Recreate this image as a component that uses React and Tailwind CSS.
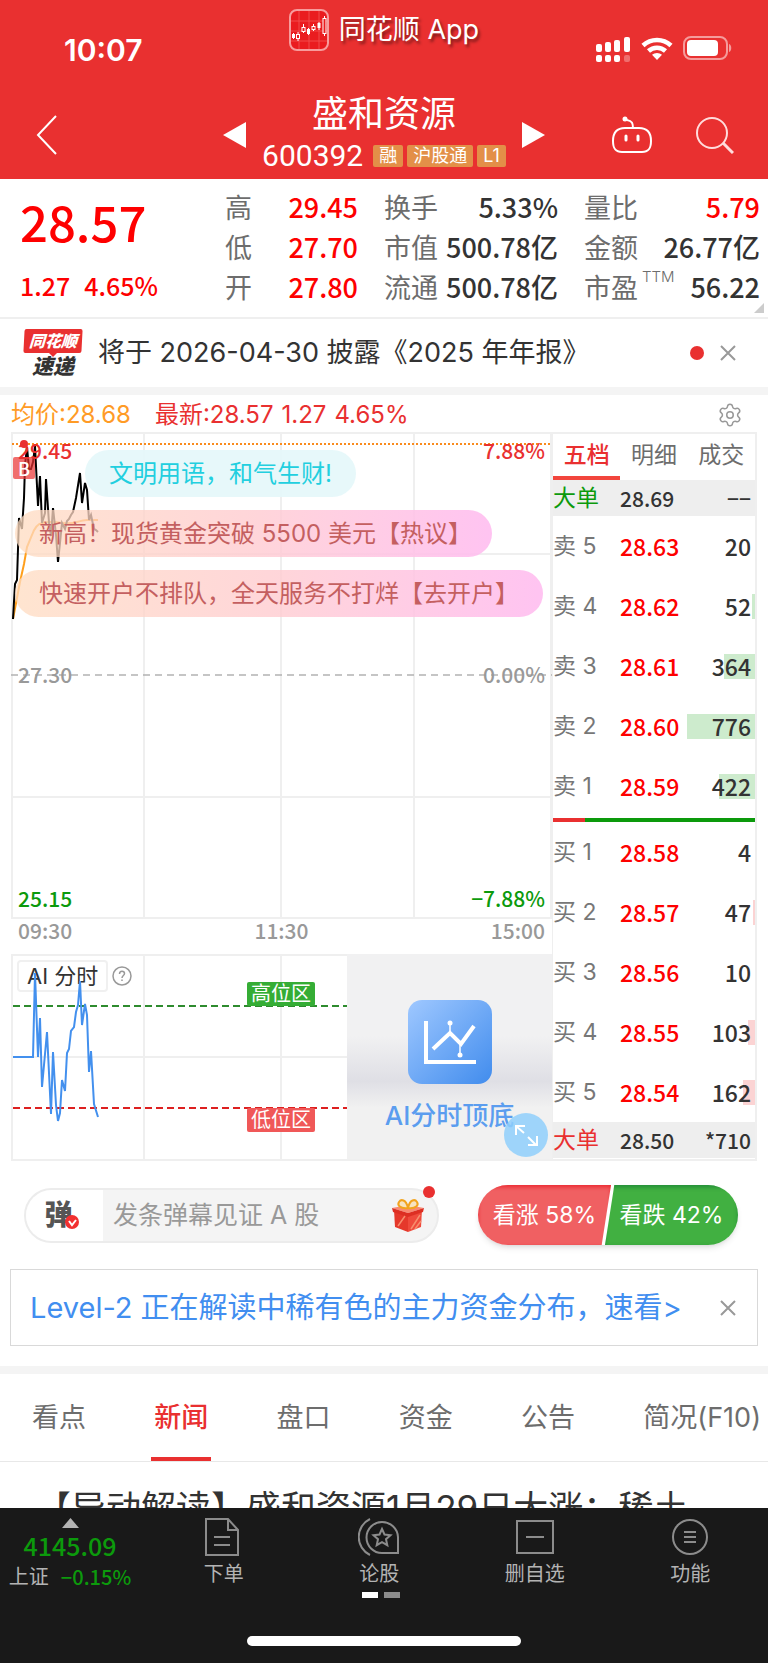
import React, { useState } from 'react';
import { Settings } from 'lucide-react';

const numFont = "font-['Noto_Sans_CJK_SC',sans-serif] font-medium";

const quoteColumns = [
  {
    width: 'w-[133px]',
    rows: [
      { label: '高', value: '29.45', red: true },
      { label: '低', value: '27.70', red: true },
      { label: '开', value: '27.80', red: true },
    ],
  },
  {
    width: 'w-[174px]',
    rows: [
      { label: '换手', value: '5.33%' },
      { label: '市值', value: '500.78亿' },
      { label: '流通', value: '500.78亿' },
    ],
  },
  {
    width: 'w-[176px]',
    rows: [
      { label: '量比', value: '5.79', red: true },
      { label: '金额', value: '26.77亿' },
      { label: '市盈', sup: 'TTM', value: '56.22' },
    ],
  },
];

const sellOrders = [
  { label: '卖', level: 5, price: '28.63', volume: 20, bar: 0 },
  { label: '卖', level: 4, price: '28.62', volume: 52, bar: 3 },
  { label: '卖', level: 3, price: '28.61', volume: 364, bar: 31 },
  { label: '卖', level: 2, price: '28.60', volume: 776, bar: 68 },
  { label: '卖', level: 1, price: '28.59', volume: 422, bar: 36 },
];

const buyOrders = [
  { label: '买', level: 1, price: '28.58', volume: 4, bar: 0 },
  { label: '买', level: 2, price: '28.57', volume: 47, bar: 2 },
  { label: '买', level: 3, price: '28.56', volume: 10, bar: 0 },
  { label: '买', level: 4, price: '28.55', volume: 103, bar: 7 },
  { label: '买', level: 5, price: '28.54', volume: 162, bar: 12 },
];

const newsTabs = ['看点', '新闻', '盘口', '资金', '公告', '简况(F10)'];

const StatusBar = () => (
  <div className="flex justify-between px-9 pt-2 pb-3.5">
    <div className="w-60 pl-7 pt-6 text-[30px] leading-9 font-semibold">10:07</div>
    <div className="flex h-11 items-center gap-2.5">
      <svg width="40" height="42" viewBox="0 0 40 42">
        <rect x="1" y="1" width="38" height="40" rx="7" fill="#ea1c1f" stroke="#f79c9c" strokeWidth="2" />
        <path d="M10 2v38M20 2v38M30 2v38M2 12h36M2 22h36M2 32h36" stroke="#f14b4b" strokeWidth="1" />
        <path d="M4.500 24v6M9 23v9M14.500 15v9M19.500 19v7M24.500 15v7M30 13v8M35.500 7v20" stroke="#fff" strokeWidth="1" />
        <g fill="#fff">
          <rect x="3" y="25" width="3" height="4" />
          <rect x="18" y="20" width="3" height="5" />
          <rect x="28.500" y="14" width="3" height="5" />
        </g>
        <g fill="#ea1c1f" stroke="#fff">
          <rect x="7.500" y="25.500" width="3" height="4" />
          <rect x="13" y="18.500" width="3" height="4" />
          <rect x="23" y="17.500" width="3" height="3" />
          <rect x="34" y="9.500" width="3" height="15" />
        </g>
      </svg>
      <span className="text-[27px] leading-9 [text-shadow:2px_3px_3px_rgba(0,0,0,0.45)]">同花顺 App</span>
    </div>
    <div className="flex w-60 items-start justify-end gap-2.5 pt-7">
      <svg width="35" height="26" viewBox="0 0 35 26" fill="#fff">
        <rect x="0" y="8" width="6" height="8" rx="2" />
        <rect x="9" y="6" width="6" height="10" rx="2" />
        <rect x="18" y="4" width="6" height="12" rx="2" />
        <rect x="28" y="1" width="6" height="15" rx="2" />
        <rect x="0" y="19" width="6" height="7" rx="2" />
        <rect x="9" y="19" width="6" height="7" rx="2" />
        <rect x="18" y="19" width="6" height="7" rx="2" />
        <rect x="28" y="19" width="6" height="7" rx="2" opacity="0.300" />
      </svg>
      <svg width="32" height="24" viewBox="0 0 32 24">
        <path d="M2 9.500a20.500 20.500 0 0 1 28 0" stroke="#fff" strokeWidth="4.500" fill="none" />
        <path d="M7.500 15a12.500 12.500 0 0 1 17 0" stroke="#fff" strokeWidth="4.500" fill="none" />
        <path d="M16 24l-5-5.200a7.500 7.500 0 0 1 10 0z" fill="#fff" />
      </svg>
      <svg width="49" height="24" viewBox="0 0 49 24">
        <rect x="1" y="1" width="43" height="22" rx="7" fill="none" stroke="#f59b9b" strokeWidth="2" />
        <rect x="4" y="4" width="31" height="16" rx="4" fill="#fff" />
        <path d="M46 8c3 1 3 7 0 8z" fill="#f59b9b" />
      </svg>
    </div>
  </div>
);

const Header = () => (
  <header className="bg-[#e93030] text-white">
    <StatusBar />
    <div className="flex items-center justify-between pt-2 pr-9 pl-9">
      <button className="w-30" aria-label="返回">
        <svg width="22" height="40" viewBox="0 0 22 40" fill="none" stroke="#fff" strokeWidth="2">
          <path d="M20 1L2 20l18 19" />
        </svg>
      </button>
      <div className="flex items-center gap-4">
        <button aria-label="上一只">
          <svg width="23" height="26" viewBox="0 0 23 26" fill="#fff">
            <path d="M0 13L23 0v26z" />
          </svg>
        </button>
        <div className="flex flex-col items-center pb-[5px]">
          <h1 className="text-[36px] leading-12">盛和资源</h1>
          <div className="flex items-center gap-2.5">
            <span className="font-[Roboto] text-[30px] leading-9">600392</span>
            <div className="flex gap-1 text-[18px] leading-[22px]">
              <span className="rounded-xs bg-[#e38f48] px-1.5">融</span>
              <span className="rounded-xs bg-[#e38f48] px-1.5">沪股通</span>
              <span className="rounded-xs bg-[#e38f48] px-1.5">L1</span>
            </div>
          </div>
        </div>
        <button aria-label="下一只">
          <svg width="23" height="26" viewBox="0 0 23 26" fill="#fff">
            <path d="M23 13L0 0v26z" />
          </svg>
        </button>
      </div>
      <div className="flex w-30 items-center gap-11">
        <button aria-label="智能助手">
          <svg width="40" height="38" viewBox="0 0 40 38" fill="none" stroke="#fff" strokeWidth="2">
            <path d="M13 12h14c9 0 12 6 12 13s-2 11-9 11H10c-7 0-9-4-9-11s3-13 12-13zM21 12c0-5-1-7-6-8" />
            <circle cx="13" cy="3" r="2.500" fill="#fff" stroke="none" />
            <path d="M14 20v4M26 20v4" strokeWidth="3" strokeLinecap="round" />
          </svg>
        </button>
        <button aria-label="搜索">
          <svg width="38" height="38" viewBox="0 0 38 38" fill="none" stroke="#ffdcdc" strokeWidth="2">
            <circle cx="16" cy="17" r="15" />
            <path d="M27 27l10 10" strokeWidth="3" />
          </svg>
        </button>
      </div>
    </div>
  </header>
);

const QuotePanel = () => (
  <section className="relative flex justify-between border-b-2 border-[#efefef] pt-2 pr-2 pb-2.5 pl-5 text-[#333]">
    <div className={`${numFont} text-[#fe0000]`}>
      <div className="pt-1 text-[49px] leading-[60px]">28.57</div>
      <div className="flex gap-3.5 pt-4 text-[25px] leading-9">
        <span>1.27</span>
        <span>4.65%</span>
      </div>
    </div>
    <div className="flex gap-[26px]">
      {quoteColumns.map((column, i) => (
        <dl key={i} className={column.width}>
          {column.rows.map((row) => (
            <div key={row.label} className="flex h-10 items-center justify-between">
              <dt className="flex pt-1 text-[27px] leading-9 text-[#6d6d6d]">
                {row.label}
                {row.sup && <sup className="top-0 pl-1 text-[15px] leading-3 font-light">{row.sup}</sup>}
              </dt>
              <dd className={`${numFont} text-[27px] leading-9 ${row.red ? 'text-[#fe0000]' : ''}`}>
                {row.value}
              </dd>
            </div>
          ))}
        </dl>
      ))}
    </div>
    <svg className="absolute right-1 bottom-1" width="10" height="10" viewBox="0 0 10 10" fill="#ccc">
      <path d="M10 0v10H0z" />
    </svg>
  </section>
);

const NoticeBar = () => (
  <section className="flex h-[76px] items-center border-b-8 border-[#f4f4f4] pr-8 pl-6">
    <div className="mr-4 flex w-[58px] flex-col items-center font-black italic">
      <span className="w-full -skew-x-3 rounded-xs bg-[#e93030] text-center text-[16px] leading-6 text-white">同花顺</span>
      <svg width="8" height="4" viewBox="0 0 8 4" fill="#e93030">
        <path d="M0 0h8L4 4z" />
      </svg>
      <span className="text-[21px] leading-5 text-[#333]">速递</span>
    </div>
    <a href="#notice" className="flex-1 text-[27px] leading-9 text-[#333]">将于 2026-04-30 披露《2025 年年报》</a>
    <span className="mr-4 h-3.5 w-3.5 rounded-full bg-[#e93030]" />
    <button aria-label="关闭">
      <svg width="16" height="16" viewBox="0 0 16 16" stroke="#999" strokeWidth="2">
        <path d="M1 1l14 14M15 1L1 15" />
      </svg>
    </button>
  </section>
);

const PriceChart = () => (
  <div className={`relative h-[488px] text-[21px] leading-6 ${numFont}`}>
    <svg className="absolute h-full w-full" viewBox="0 0 541 488" preserveAspectRatio="none" fill="none">
      <path d="M1 1h539v485H1zM133 1v485M270 1v485M403 1v485M1 122h539M1 365h539" stroke="#efefef" strokeWidth="2" />
      <path d="M1 12h539" stroke="#f98b1e" strokeWidth="2" strokeDasharray="2 2" />
      <path d="M0 243h541" stroke="#b3b3b3" strokeWidth="1.500" strokeDasharray="7 5" />
      <path d="M2 187L9 150L13 132L16 115L21 103Q25 92 31 91Q35 90 40 90T52 91T66 90T76 88H87" stroke="#ff9f1c" strokeWidth="2" />
      <path
        d="M2 187L4 152L6 148L8 86L11 97L13 66L14 33L16 15L18 37L20 37L22 30L24 14L27 74L29 44L31 91L34 81L35 47L38 91L40 104L42 76L45 103L47 130L49 111L51 91L54 97L56 89L58 87L60 83L62 80L65 66L69 41L71 71L74 51L76 58L78 88L80 83L83 97L85 98L87 100"
        stroke="#000"
        strokeWidth="2"
      />
      <circle cx="13" cy="12" r="4" fill="#e93030" />
    </svg>
    <span className="absolute top-1.5 left-[7px] text-[#e93030]">29.45</span>
    <span className="absolute top-1.5 right-[7px] text-[#e93030]">7.88%</span>
    <span className="absolute top-[230px] left-[7px] text-[#999]">27.30</span>
    <span className="absolute top-[230px] right-[7px] text-[#999]">0.00%</span>
    <span className="absolute bottom-2.5 left-[7px] text-[#0c9a0c]">25.15</span>
    <span className="absolute right-[7px] bottom-2.5 text-[#0c9a0c]">−7.88%</span>
    <span className="absolute top-[25px] left-0.5 h-[22px] w-[22px] rounded-xs bg-[#e93030]/70 text-center text-[18px] leading-[22px] text-white">B</span>
    <div className="absolute inset-x-0 top-[18px] flex flex-col items-start gap-[13px] font-['Inter','Noto_Sans_CJK_SC',sans-serif] text-[24px] leading-[47px] font-normal whitespace-nowrap text-[#c45f60]">
      <span className="ml-[74px] rounded-full bg-[#e4f7fa]/90 px-6 text-[#22cfdf]">文明用语，和气生财!</span>
      <a href="#gold" className="ml-1 rounded-full bg-linear-to-r from-[#ffdcc0]/75 via-[#ffcbd0]/80 to-[#ffbdf0]/90 pr-5 pl-6">
        新高！现货黄金突破 5500 美元【热议】
      </a>
      <a href="#open" className="ml-1 rounded-full bg-linear-to-r from-[#ffdcc0]/75 via-[#ffcbd0]/80 to-[#ffbdf0]/90 pr-6 pl-6">
        快速开户不排队，全天服务不打烊【去开户】
      </a>
    </div>
  </div>
);

const AiChart = () => (
  <div className="relative flex h-[207px] justify-end">
    <svg className="absolute h-full w-full" viewBox="0 0 541 207" preserveAspectRatio="none" fill="none">
      <path d="M1 1h539v205H1zM133 1v205M270 1v205M403 1v205M1 103h539" stroke="#efefef" strokeWidth="2" />
    </svg>
    <button className="absolute top-1.5 left-1.5 h-8 rounded-sm border-2 border-[#f0f0f0] bg-white px-2 text-[22px] leading-7 text-[#333]">
      AI 分时
    </button>
    <svg className="absolute top-3 left-[101px]" width="20" height="20" viewBox="0 0 20 20" fill="none" stroke="#999" strokeWidth="1.500">
      <circle cx="10" cy="10" r="9" />
      <path d="M7.500 8c0-4 5-3.500 5-.500 0 2-2.500 2-2.500 4.500M10 13.500v1.500" />
    </svg>
    <svg className="absolute h-full w-full" viewBox="0 0 541 207" preserveAspectRatio="none" fill="none">
      <path d="M2 52h336" stroke="#2e8b2e" strokeWidth="2" strokeDasharray="7 4" />
      <path d="M2 154h336" stroke="#dd2020" strokeWidth="2" strokeDasharray="7 4" />
      <path
        d="M2 103L22 103L24 19L27 103L29 64L31 133L36 78L40 160L42 98L45 151L47 167L49 159L51 126L54 137L56 99L58 95L60 77L63 73L65 58L67 51L69 27L71 71L74 50L76 61L78 118L80 97L83 150L87 163"
        stroke="#4390ee"
        strokeWidth="2"
      />
    </svg>
    <span className="absolute top-7 left-[236px] rounded-xs bg-[#35ad35] px-1 text-[20px] leading-6 text-white">高位区</span>
    <span className="absolute top-[154px] left-[236px] rounded-xs bg-[#f05858] px-1 text-[20px] leading-6 text-white">低位区</span>
    <div className="relative mb-0.5 flex w-[205px] flex-col items-center bg-linear-to-b from-[#f1f1f2] from-40% via-[#dfdfe5] via-62% to-[#f1f1f1] to-75% pt-[46px]">
      <svg width="84" height="84" viewBox="0 0 84 84" fill="none" stroke="#fff">
        <defs>
          <linearGradient id="aiIcon" x1="0" y1="0" x2="1" y2="1">
            <stop stopColor="#9fc8ff" />
            <stop offset="1" stopColor="#418ced" />
          </linearGradient>
        </defs>
        <rect width="84" height="84" rx="14" fill="url(#aiIcon)" stroke="none" />
        <path d="M18 21v41h50" strokeWidth="4" />
        <path d="M25 49l17-16 11 11 13-18" strokeWidth="4" />
        <path d="M42 23v10M52 44v11" strokeWidth="1.500" />
        <circle cx="42" cy="23" r="2.500" fill="#fff" stroke="none" />
        <circle cx="52" cy="55" r="2.500" fill="#fff" stroke="none" />
      </svg>
      <span className="pt-4 text-[26px] leading-8 font-medium text-[#5b9def]">AI分时顶底</span>
      <button className="absolute right-1 bottom-0.5 h-11 w-11 rounded-full bg-[#8fcffc]/85" aria-label="展开">
        <svg width="44" height="44" viewBox="0 0 44 44" fill="none" stroke="#fff" strokeWidth="2">
          <path d="M20 20l-8-7M12 22v-9h9M24 24l8 8M33 23v9h-9" />
        </svg>
      </button>
    </div>
  </div>
);

const OrderRow = ({ order, barColor }) => (
  <tr className="h-[60px]">
    <th scope="row" className="w-[67px] text-left text-[23px] font-normal text-[#777]">
      {order.label} {order.level}
    </th>
    <td className={`${numFont} text-[23px] text-[#fe0000]`}>{order.price}</td>
    <td className={`${numFont} relative pr-1 text-right text-[23px]`}>
      {order.bar > 0 && (
        <span className={`absolute top-[18px] right-0 h-[25px] ${barColor}`} style={{ width: order.bar }} />
      )}
      <span className="relative">{order.volume}</span>
    </td>
  </tr>
);

const OrderBook = () => (
  <aside className="border-2 border-l-1 border-[#efefef] text-[#333]">
    <div className="flex text-[23px] whitespace-nowrap text-[#6d6d6d]">
      <button className="h-[46px] flex-1 border-b-4 border-[#f2453d] font-medium text-[#e93030]">五档</button>
      <button className="flex-1 pb-1">明细</button>
      <button className="flex-1 pb-1">成交</button>
    </div>
    <table className="w-full leading-7">
      <tbody>
        <tr className="h-[36px] bg-[#eee]">
          <th scope="row" className="w-[67px] text-left text-[23px] font-normal text-[#0c9a0c]">大单</th>
          <td className={`${numFont} text-[21px]`}>28.69</td>
          <td className={`${numFont} pr-1 text-right text-[21px]`}>−−</td>
        </tr>
        {sellOrders.map((order) => (
          <OrderRow key={order.level} order={order} barColor="bg-[#cdebcd]" />
        ))}
        <tr>
          <td colSpan={3} className="pt-0.5">
            <div className="flex h-1">
              <div className="w-[16%] bg-[#e93030]" />
              <div className="flex-1 bg-[#0c9a0c]" />
            </div>
          </td>
        </tr>
        {buyOrders.map((order) => (
          <OrderRow key={order.level} order={order} barColor="bg-[#fbd3d3]" />
        ))}
        <tr className="h-[36px] bg-[#eee]">
          <th scope="row" className="text-left text-[23px] font-normal text-[#e93030]">大单</th>
          <td className={`${numFont} text-[21px]`}>28.50</td>
          <td className={`${numFont} pr-1 text-right text-[21px]`}>*710</td>
        </tr>
      </tbody>
    </table>
  </aside>
);

const ChartSection = () => (
  <section className="px-[11px]">
    <div className="flex h-[37px] items-center justify-between pt-0.5 pr-3.5 text-[24px] leading-8">
      <div className="flex gap-6">
        <span className="text-[#ff9b26]">均价:28.68</span>
        <span className="flex gap-2 text-[#e93030]">
          <span>最新:28.57</span>
          <span>1.27</span>
          <span>4.65%</span>
        </span>
      </div>
      <button aria-label="设置">
        <Settings className="h-[26px] w-[26px] text-[#999]" strokeWidth={1.4} />
      </button>
    </div>
    <div className="grid grid-cols-[1fr_205px]">
      <div>
        <PriceChart />
        <div className={`${numFont} flex h-[34px] justify-between px-[7px] text-[21px] leading-5 text-[#999]`}>
          <span>09:30</span>
          <span>11:30</span>
          <span>15:00</span>
        </div>
        <AiChart />
      </div>
      <OrderBook />
    </div>
  </section>
);

const CommentRow = () => {
  const [comment, setComment] = useState('');

  return (
    <section className="flex items-center justify-between pt-6 pr-[30px] pb-6 pl-6">
      <div className="relative flex h-[55px] w-[415px] items-center rounded-full border-2 border-[#ececec] bg-[#f4f4f4]">
        <button className="relative h-full w-[77px] rounded-l-full bg-white pr-5 pl-2 text-[28px] font-black text-[#555]" aria-label="弹幕">
          弹
          <svg className="absolute right-6 bottom-3" width="14" height="14" viewBox="0 0 14 14">
            <circle cx="7" cy="7" r="7" fill="#f23030" />
            <path d="M4 6l3 4 4-5" fill="none" stroke="#fff" strokeWidth="2" />
          </svg>
        </button>
        <input
          aria-label="发条弹幕"
          className="min-w-0 flex-1 pl-2.5 text-[25px] leading-8 outline-none placeholder:text-[#999]"
          placeholder="发条弹幕见证 A 股"
          value={comment}
          onChange={(e) => setComment(e.target.value)}
        />
        <button className="mr-3" aria-label="礼物">
          <svg width="34" height="36" viewBox="0 0 34 36">
            <path d="M3 13l14 5v17L4 30z" fill="#e5382b" />
            <path d="M17 18l14-5-1 17-13 5z" fill="#ef4a3c" />
            <path d="M1 11l16-3 16 3-16 5z" fill="#f98a72" />
            <path d="M1 11l16 5v4L2 15zM33 11l-16 5v4l15-5z" fill="#dd2f23" />
            <path d="M20 32l9-14M24 32l6-8M7 29l7-10" stroke="#f68d6d" strokeWidth="1.500" />
            <path d="M17 11C9 12 6 8 8 5s7-3 9 6zM17 11c8 1 11-3 9-6s-7-3-9 6z" fill="#f7e3c0" stroke="#f2a31d" strokeWidth="2" />
          </svg>
        </button>
        <span className="absolute -top-1 right-0.5 h-3 w-3 rounded-full bg-[#e93030]" />
      </div>
      <div className="flex h-[60px] w-[260px] overflow-hidden rounded-full text-[23px] leading-8 text-white shadow-md">
        <button className="z-1 flex-1 bg-[#f06062] inset-shadow-sm inset-shadow-red-600/60 [clip-path:polygon(0_0,100%_0,93%_100%,0_100%)]">看涨 58%</button>
        <button className="-ml-1.5 flex-1 bg-[#41b041] inset-shadow-sm inset-shadow-green-800/50 [clip-path:polygon(7%_0,100%_0,100%_100%,0_100%)]">看跌 42%</button>
      </div>
    </section>
  );
};

const LevelTwoBanner = () => (
  <div className="px-2.5 pb-5">
    <div className="flex h-[77px] items-center justify-between border border-[#d9d9d9] pr-[21px] pl-[19px]">
      <a href="#level2" className="text-[29px] leading-10 whitespace-nowrap text-[#418ef0]">
        Level-2 正在解读中稀有色的主力资金分布，速看&gt;
      </a>
      <button aria-label="关闭">
        <svg width="16" height="16" viewBox="0 0 16 16" stroke="#999" strokeWidth="2">
          <path d="M1 1l14 14M15 1L1 15" />
        </svg>
      </button>
    </div>
  </div>
);

const NewsSection = () => {
  const [active, setActive] = useState('新闻');

  return (
    <section className="border-t-8 border-[#f4f4f4]">
      <nav className="flex justify-between border-b border-[#e8e8e8] pr-1 pl-[29px] text-[27px] leading-9">
        {newsTabs.map((tab) => (
          <button
            key={tab}
            onClick={() => setActive(tab)}
            className={`h-[87px] border-b-4 px-[3px] pt-1 ${
              active === tab ? 'border-[#e93030] font-medium text-[#e93030]' : 'border-transparent text-[#6d6d6d]'
            }`}
          >
            {tab}
          </button>
        ))}
      </nav>
      <div className="h-[46px] overflow-hidden pt-[22px] pl-9">
        <a href="#news" className="text-[35px] leading-12 whitespace-nowrap text-[#333]">【异动解读】盛和资源1月29日大涨：稀土</a>
      </div>
    </section>
  );
};

const NavItem = ({ label, children }) => (
  <button className="flex flex-1 flex-col items-center gap-1.5">
    <svg width="42" height="38" viewBox="0 0 42 38" fill="none" stroke="#8c8c8c" strokeWidth="2">
      {children}
    </svg>
    <span className="text-[20px] leading-6 text-[#b3b3b3]">{label}</span>
  </button>
);

const BottomBar = () => (
  <footer className="bg-[#191919]">
    <div className="flex h-[128px] items-start pt-2.5">
      <button className="flex w-[146px] flex-col items-center pr-1.5 text-[#0c9a0c]">
        <svg width="17" height="10" viewBox="0 0 17 10" fill="#b3b3b3">
          <path d="M8.500 0L17 10H0z" />
        </svg>
        <span className={`${numFont} pt-0.5 text-[25px] leading-[31px]`}>4145.09</span>
        <span className="flex gap-3 pt-0.5 text-[20px] leading-7">
          <span className="text-[#b3b3b3]">上证</span>
          <span className={numFont}>−0.15%</span>
        </span>
      </button>
      <NavItem label="下单">
        <path d="M3 1h22l10 11v25H3zM25 1v11h10M11 19h16M11 27h16" />
      </NavItem>
      <div className="relative flex flex-1">
        <NavItem label="论股">
          <path d="M24 4a15.500 15.500 0 0 0 0 31h16V19A16 16 0 0 0 24 4zM12 1a20 20 0 0 0 0 36" />
          <path d="M24 11l2.500 5.500 6 .7-4.500 4 1.300 6-5.300-3-5.300 3 1.300-6-4.500-4 6-.7z" />
        </NavItem>
        <span className="absolute inset-x-0 -bottom-3 flex justify-center gap-1.5 pl-1">
          <span className="h-1.5 w-4 bg-white" />
          <span className="h-1.5 w-4 bg-[#8c8c8c]" />
        </span>
      </div>
      <NavItem label="删自选">
        <path d="M3 3h36v32H3zM12 19h18" />
      </NavItem>
      <NavItem label="功能">
        <circle cx="21" cy="19" r="17" />
        <path d="M15 14h12M15 19h12M15 24h12" />
      </NavItem>
    </div>
    <div className="flex justify-center pb-[17px]">
      <div className="h-2.5 w-[274px] rounded-full bg-white" />
    </div>
  </footer>
);

const App = () => (
  <div className="flex min-h-screen flex-col bg-white font-['Inter','Noto_Sans_CJK_SC',sans-serif]">
    <Header />
    <main className="flex-1">
      <QuotePanel />
      <NoticeBar />
      <ChartSection />
      <CommentRow />
      <LevelTwoBanner />
      <NewsSection />
    </main>
    <BottomBar />
  </div>
);

export default App;
